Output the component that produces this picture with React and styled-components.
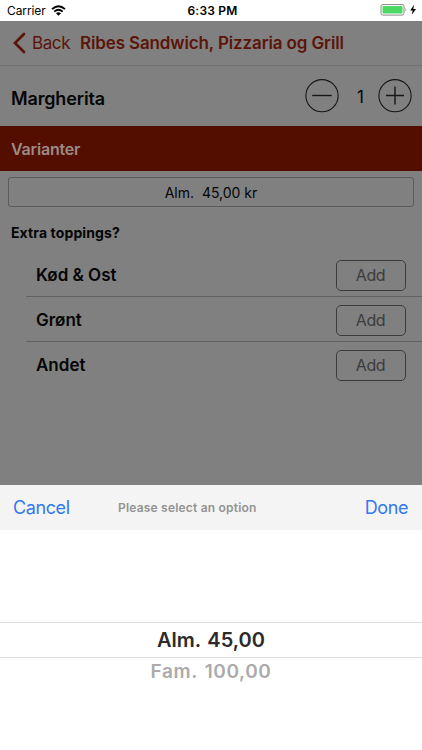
import React from "react";
import styled, { createGlobalStyle } from "styled-components";

const toppings = ["Kød & Ost", "Grønt", "Andet"];

const App = () => {
  return (
    <Screen>
      <GlobalStyle />
      <StatusBar>
        <Carrier>
          <span>Carrier</span>
          <WifiIcon />
        </Carrier>
        <Clock>6:33 PM</Clock>
        <Power>
          <BatteryIcon />
        </Power>
      </StatusBar>
      <Page>
        <NavBar>
          <svg width="13" height="22" viewBox="0 0 13 22">
            <path
              d="M11 2 L2 11 L11 20"
              fill="none"
              stroke="#5c1409"
              strokeWidth="2.7"
              strokeLinecap="round"
            />
          </svg>
          <Back>Back</Back>
          <Title>Ribes Sandwich, Pizzaria og Grill</Title>
        </NavBar>
        <Product>
          <ProductName>Margherita</ProductName>
          <Stepper>
            <StepButton aria-label="Remove one">
              <StepIcon />
            </StepButton>
            <Amount>1</Amount>
            <StepButton aria-label="Add one">
              <StepIcon plus />
            </StepButton>
          </Stepper>
        </Product>
        <SectionHeader>Varianter</SectionHeader>
        <VariantSelect>Alm.&nbsp; 45,00 kr</VariantSelect>
        <Question>Extra toppings?</Question>
        <ToppingList>
          {toppings.map((name) => (
            <Topping key={name}>
              <span>{name}</span>
              <AddButton>Add</AddButton>
            </Topping>
          ))}
        </ToppingList>
      </Page>
      <Toolbar>
        <ToolbarButton>Cancel</ToolbarButton>
        <Hint>Please select an option</Hint>
        <ToolbarButton>Done</ToolbarButton>
      </Toolbar>
      <Picker>
        <Option $selected>Alm.&nbsp; 45,00</Option>
        <Option>Fam.&nbsp; 100,00</Option>
      </Picker>
    </Screen>
  );
};

const WifiIcon = () => (
  <svg width="15" height="11" viewBox="0 0 15 11">
    <g fill="none" stroke="#000" strokeWidth="1.9">
      <path d="M1 4.1 Q7.5 -1.7 14 4.1" />
      <path d="M3.3 6.6 Q7.5 3 11.7 6.6" />
    </g>
    <path d="M5 8.3 Q7.5 6.3 10 8.3 L7.5 10.8 Z" fill="#000" />
  </svg>
);

const BatteryIcon = () => (
  <svg width="37" height="13" viewBox="0 0 37 13">
    <rect
      x="1"
      y="0.5"
      width="23"
      height="10.6"
      rx="2"
      fill="#fff"
      stroke="#8c8c8c"
    />
    <rect x="2.5" y="2" width="20" height="7.6" rx="0.8" fill="#4cd964" />
    <path d="M25.5 3.8 Q27.1 5.8 25.5 7.8 Z" fill="#8c8c8c" />
    <path d="M34 0.8 L30.2 6.4 H32.7 L31.8 10.8 L36 5 H33.3 Z" fill="#000" />
  </svg>
);

const StepIcon = ({ plus }) => (
  <svg width="34" height="34" viewBox="0 0 34 34">
    <g fill="none" stroke="#161616" strokeWidth="1.1">
      <circle cx="17" cy="16.7" r="16.1" />
      <path
        d={plus ? "M8 16.5 H26 M17 7.5 V25.5" : "M7.2 16.5 H26.8"}
        strokeWidth="1.4"
      />
    </g>
  </svg>
);

const GlobalStyle = createGlobalStyle`
  * {
    box-sizing: border-box;
  }
  body {
    margin: 0;
    background: #fff;
    font-family: Inter, "Liberation Sans", sans-serif;
  }
  svg {
    display: block;
    flex: none;
  }
  button {
    font-family: inherit;
    background: none;
    border: none;
    padding: 0;
    margin: 0;
  }
`;

const Screen = styled.div`
  width: 422px;
  height: 750px;
  display: flex;
  flex-direction: column;
  overflow: hidden;
  white-space: nowrap;
`;

const StatusBar = styled.div`
  height: 21px;
  display: grid;
  grid-template-columns: 1fr auto 1fr;
  align-items: center;
  padding: 0 5px 0 7px;
  color: #000;
`;

const Carrier = styled.div`
  display: flex;
  align-items: center;
  gap: 5px;
  font-size: 12px;
  letter-spacing: -0.1px;
`;

const Clock = styled.div`
  padding-left: 1px;
  font-size: 12px;
  font-weight: 600;
  letter-spacing: 0.2px;
`;

const Power = styled.div`
  display: flex;
  justify-content: flex-end;
`;

const Page = styled.div`
  height: 464px;
  background: #808080;
  color: #050505;
`;

const NavBar = styled.div`
  height: 45px;
  display: flex;
  align-items: center;
  padding-left: 13px;
  border-bottom: 1px solid #717173;
  color: #5c1409;
`;

const Back = styled.span`
  width: 48px;
  margin-left: 6px;
  font-size: 17px;
  letter-spacing: -0.4px;
`;

const Title = styled.span`
  font-size: 17px;
  font-weight: 600;
  letter-spacing: -0.13px;
`;

const Product = styled.div`
  height: 60px;
  display: flex;
  align-items: center;
  justify-content: space-between;
  padding: 0 10px 0 11px;
`;

const ProductName = styled.span`
  padding-top: 4px;
  font-size: 18px;
  font-weight: 600;
  letter-spacing: -0.15px;
`;

const Stepper = styled.div`
  display: flex;
  align-items: center;
`;

const StepButton = styled.button`
  width: 34px;
  height: 34px;
`;

const Amount = styled.span`
  width: 39px;
  padding: 2px 0 0 4px;
  text-align: center;
  font-size: 17px;
`;

const SectionHeader = styled.div`
  height: 45px;
  display: flex;
  align-items: center;
  padding-left: 11px;
  background: #540e00;
  color: #9c8a88;
  font-size: 16px;
  font-weight: 600;
  letter-spacing: -0.18px;
`;

const VariantSelect = styled.div`
  height: 30px;
  margin: 6px 8px 0;
  display: flex;
  align-items: center;
  justify-content: center;
  border: 1px solid #5c5c5c;
  border-radius: 3px;
  font-size: 14px;
`;

const Question = styled.div`
  padding: 17px 0 0 11px;
  font-size: 14px;
  line-height: 18px;
  font-weight: 700;
  letter-spacing: 0.12px;
`;

const ToppingList = styled.div`
  margin: 10px 0 0 26px;
`;

const Topping = styled.div`
  height: 44px;
  display: flex;
  align-items: center;
  justify-content: space-between;
  padding: 2px 16px 0 10px;
  font-size: 17px;
  font-weight: 600;
  & + & {
    height: 45px;
    border-top: 1px solid #626262;
  }
`;

const AddButton = styled.button`
  width: 70px;
  height: 31px;
  padding-right: 1px;
  border: 1px solid #3c3c3c;
  border-radius: 5px;
  color: #3c3c3c;
  font-size: 16px;
  letter-spacing: -0.4px;
`;

const Toolbar = styled.div`
  height: 45px;
  display: grid;
  grid-template-columns: 105px 1fr auto;
  align-items: center;
  justify-items: start;
  padding: 0 14px 0 13px;
  background: #f4f4f4;
`;

const ToolbarButton = styled.button`
  color: #3478f0;
  font-size: 18px;
  letter-spacing: -0.4px;
`;

const Hint = styled.span`
  color: #939393;
  font-size: 12px;
  font-weight: 600;
  letter-spacing: 0.2px;
`;

const Picker = styled.div`
  height: 220px;
  padding-top: 92px;
  background: #fff;
  text-align: center;
`;

const Option = styled.div`
  height: ${(props) => (props.$selected ? "36px" : "30px")};
  line-height: ${(props) => (props.$selected ? "34px" : "28px")};
  border: solid #dedede;
  border-width: ${(props) => (props.$selected ? "1px 0" : "0")};
  color: ${(props) => (props.$selected ? "#2b2b2b" : "#ababab")};
  font-size: ${(props) => (props.$selected ? "20px" : "19px")};
  font-weight: 600;
  letter-spacing: ${(props) => (props.$selected ? "0" : "0.6px")};
  word-spacing: -2px;
`;

export default App;
